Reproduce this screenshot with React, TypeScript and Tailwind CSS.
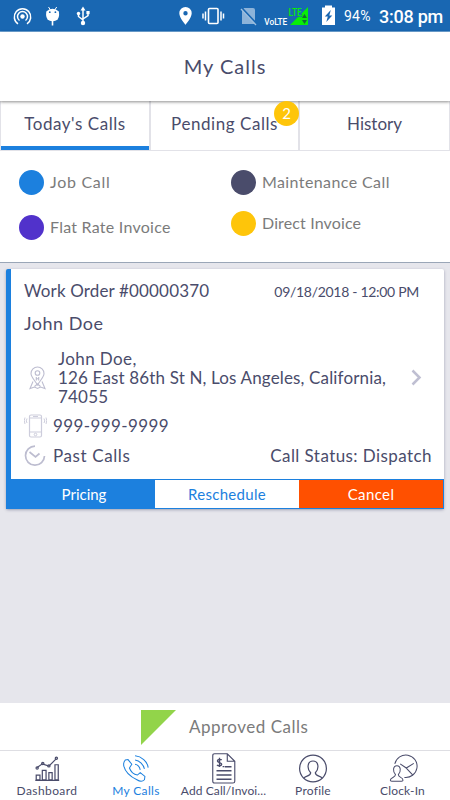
import React from 'react';

const ink = 'text-[#4a4c6b]';

function StatusBar() {
  return (
    <div className="flex h-[32px] shrink-0 items-center border-b border-[#6fa5d6] bg-[#1967b2] font-['Roboto',sans-serif] text-white">
      <svg className="h-[31px] w-[260px] shrink-0" viewBox="0 0 260 31" fill="none" stroke="white">
        <circle cx="22.500" cy="16.500" r="2.200" fill="white" stroke="none" />
        <path d="M19.500 20.500a5 5 0 1 1 6 0M18 23.800a8.200 8.200 0 1 1 9 0" strokeWidth="1.500" />
        <g fill="white" stroke="none">
          <path d="M46.300 11.500Q49 8.800 52.500 8.800T58.900 11.500Q60 18.500 56 20.500Q52.500 22 49.200 20.500Q45.200 18.500 46.300 11.500z" />
          <rect x="51.700" y="21" width="1.600" height="4.500" />
          <circle cx="49.800" cy="12.200" r=".9" fill="#1967b2" />
          <circle cx="55.400" cy="12.200" r=".9" fill="#1967b2" />
        </g>
        <path d="M48.500 7l2 3M56.700 7l-2 3" strokeWidth="1" />
        <path d="M83 8v15M78.500 13v3.500l4.500 3.500M88 12v3.500l-5 3.500" strokeWidth="1.500" />
        <g fill="white" stroke="none">
          <path d="M83 6.500l2.500 4h-5z" />
          <circle cx="83" cy="23" r="2.200" />
          <circle cx="78.500" cy="13.500" r="1.700" />
          <rect x="86.400" y="11" width="3.200" height="3.200" />
          <path fillRule="evenodd" d="M185.500 7a6.200 6.200 0 0 0-6.200 6.200c0 4.600 6.200 11.500 6.200 11.500s6.200-6.900 6.200-11.500A6.200 6.200 0 0 0 185.500 7zm0 4a2.200 2.200 0 1 1 0 4.400a2.200 2.200 0 0 1 0-4.400z" />
          <path d="M242 10l2-2h9q2 0 2 2v14h-13z" fillOpacity=".5" />
        </g>
        <rect x="208.500" y="8.500" width="9.500" height="15" rx="1" strokeWidth="1.600" />
        <path d="M205.500 11.500v9M221 11.500v9M203 13.500v5M223.500 13.500v5" strokeWidth="1.500" />
        <path d="M241.500 8l15 16" stroke="#1967b2" strokeWidth="2.500" />
        <path d="M241 9l15 16" stroke="#9fc0e0" strokeWidth="1.300" />
      </svg>
      <svg className="h-[31px] w-[84px] shrink-0" viewBox="260 0 84 31">
        <text x="264.300" y="24.700" fontFamily="Roboto, sans-serif" fontSize="9.500" fontWeight="500" fill="white" textLength="23" lengthAdjust="spacingAndGlyphs">VoLTE</text>
        <path d="M308 7v18h-18z" fill="#08ee08" />
        <text x="288.500" y="15.500" fontFamily="Roboto, sans-serif" fontSize="11" fontWeight="500" fill="#08ee08" stroke="#1967b2" strokeWidth="1.500" paintOrder="stroke" textLength="13" lengthAdjust="spacingAndGlyphs">LTE</text>
        <path d="M304.500 14l2.500 4h-5zM304.500 24l2.500-4h-5z" fill="#126c38" />
        <path d="M322 7.500h3v-2h7v2h3V25h-13z" fill="white" />
        <path d="M330.800 10l-6 6.500h3l-1.500 5.500 6-6.500h-3z" fill="#1967b2" />
      </svg>
      <span className="w-[35px] pt-[2px] text-[14px] tracking-[0.200px] whitespace-nowrap">94%</span>
      <span className="pt-[2px] text-[18px] font-medium tracking-[-0.250px] whitespace-nowrap">3:08 pm</span>
    </div>
  );
}

function Legend({ dot, label, spacing }: { dot: string; label: string; spacing: string }) {
  return (
    <div className="flex h-[26px] items-center gap-[6px]">
      <span className={`h-[25px] w-[25px] shrink-0 rounded-full ${dot}`} />
      <span className={`text-[16px] whitespace-nowrap text-[#7b7b7b] ${spacing}`}>{label}</span>
    </div>
  );
}

function Card() {
  return (
    <section className={`mx-[6px] mt-[6px] h-[240px] w-[438px] rounded-[2px] border-l-[5px] border-[#1c80de] bg-white shadow-[0_1px_3px_rgba(70,75,110,0.45)] ${ink}`}>
      <div className="flex h-[210px] flex-col pl-[13px]">
        <div className="flex h-[23px] items-center justify-between pt-[21px] pr-[25px]">
          <span className="text-[17px] tracking-[0.150px]">Work Order #00000370</span>
          <span className="text-[14px] tracking-[-0.300px]">09/18/2018 - 12:00 PM</span>
        </div>
        <div className="mt-[19px] h-[24px] text-[18px] leading-[24px] tracking-[0.500px]">John Doe</div>
        <div className="mt-[14px] flex h-[57px] items-center">
          <svg className="ml-[5px] h-[24px] w-[17px] shrink-0" viewBox="0 0 17 24" fill="none" stroke="#bdbdd0" strokeWidth="1.100">
            <path d="M8.500 19C5.500 14 2 11 2 7.500a6.500 6.500 0 0 1 13 0C15 11 11.500 14 8.500 19z" />
            <circle cx="8.500" cy="7" r="2.300" />
            <path d="M4 15.500L1 22.500l4.500-1.500 3 1.500 3-1.500 4.500 1.500-3-7M7.300 11v3.500M9.700 11v3.500M7.300 12.700h2.400M5.500 20.500l3-2.500 3 2.500" />
          </svg>
          <div className="ml-[12px] text-[17px] leading-[19px] tracking-[0.150px] whitespace-nowrap">
            <div className="tracking-[0.400px]">John Doe,</div>
            <div>126 East 86th St N, Los Angeles, California,</div>
            <div className="tracking-[0.200px]">74055</div>
          </div>
          <svg className="mr-[22px] ml-auto h-[17px] w-[11px] shrink-0" viewBox="0 0 11 17" fill="none" stroke="#bfbfd2" strokeWidth="2.500">
            <path d="M1.500 1.500l7 7-7 7" />
          </svg>
        </div>
        <div className="mt-[7px] flex h-[26px] items-center">
          <svg className="h-[24px] w-[23px] shrink-0" viewBox="0 0 23 24" fill="none" stroke="#cdcddc">
            <rect x="5.500" y="1" width="12" height="22" rx="1.500" strokeWidth="1.200" />
            <path d="M5.500 4h12M5.500 18h12M9 2.500h5M3 4.500q-1.500 2.500 0 4.500M1 3.500q-1.500 3 0 6.500M20 4.500q1.500 2.500 0 4.500M22 3.500q1.500 3 0 6.500" />
            <circle cx="11.500" cy="20.500" r="1.300" />
          </svg>
          <span className="ml-[6px] text-[17px] tracking-[0.400px]">999-999-9999</span>
        </div>
        <div className="mt-[3px] flex h-[28px] items-center">
          <svg className="h-[22px] w-[23px] shrink-0" viewBox="0 0 23 22" fill="none" stroke="#bdbdd0" strokeWidth="1.700">
            <path d="M11 1.200A9.500 9.500 0 1 0 20.500 11M5.500 7l6 5 4-3.500" />
          </svg>
          <span className="ml-[6px] text-[17px] tracking-[0.600px]">Past Calls</span>
          <span className="mr-[12px] ml-auto text-[17px] tracking-[0.430px]">Call Status:&nbsp;Dispatch</span>
        </div>
      </div>
      <div className="-ml-[5px] grid h-[30px] grid-cols-[149px_144px_144px] border-y border-r border-[#1c80de] text-center text-[15px] leading-[28px] text-white">
        <div className="bg-[#1c80de] pl-[7px]">Pricing</div>
        <div className="bg-white tracking-[0.300px] text-[#1c80de]">Reschedule</div>
        <div className="bg-[#ff5000] tracking-[0.400px]">Cancel</div>
      </div>
    </section>
  );
}

const icons = {
  dashboard: (
    <g strokeWidth="1.300">
      <path d="M3.500 28.500v-5h4v5zM10 28.500v-10h4v10zM17 28.500v-7.500h3.500v7.500zM23.500 28.500v-16h3.500v16zM2.500 29.200h25.500" />
      <path d="M4.500 15.500l5.500-4 7 2.500 8-8" />
      <circle cx="4.500" cy="16" r="1.200" /><circle cx="10.500" cy="11.200" r="1.200" /><circle cx="17" cy="13.700" r="1.200" /><circle cx="25" cy="5.500" r="1.200" />
    </g>
  ),
  calls: (
    <g strokeWidth="1.100">
      <path d="M3.500 7.500L6.500 7l4 5-2.500 4c1.500 4 5 7 8.500 7.500l3-2.500 5 4-.5 3.500c-2 2-5 2-8 0C8.500 25 3.500 20 2 14c-.5-3 0-5 1.500-6.500z" />
      <path d="M14 12c3 .5 5 3 5.500 6M14 7.500c5 .5 9 5 10 9.500M14 3c7 .5 13 6 14 12.500" />
    </g>
  ),
  invoice: (
    <g strokeWidth="1.200">
      <path d="M5 .8h13.500l8 8V30q0 2-2 2H5q-2 0-2-2V2.800q0-2 2-2M18.500.8v8h8" />
      <path d="M16 14.500h7M7 19h16M7 23.500h16M7 28h16" strokeWidth="1.600" />
      <path d="M12.500 7.500c-1-1.200-4.500-1-4.500 1s4.500 1.500 4.500 3.500-3.500 2.200-5 .8M10.200 5v10M13.500 14.500h2" strokeWidth="1.500" />
    </g>
  ),
  profile: (
    <g strokeWidth="1.300">
      <circle cx="15" cy="16.500" r="14.300" />
      <path d="M5.500 26.500c1.500-2.500 7-1.500 7-5.500-4-4-4-12.500 2.500-12.500s6.500 8.500 2.500 12.500c0 4 5.500 3 7 5.500" />
    </g>
  ),
  clock: (
    <g strokeWidth="1.100">
      <path d="M6.300 11.500A12 12 0 1 1 16.500 26M12 11.500l6.500 4.500 8-5M18.500 16l6.500 7" />
      <path d="M1.500 29c0-3.500 5.500-2.500 5.500-6-3-3-3-9.500 1.500-9.500s4.500 6.500 1.500 9.500c0 3.500 5 2.500 5 6q0 1-1.500 1h-10.500q-1.500 0-1.500-1z" />
    </g>
  ),
};

function Tab({ icon, label, active, spacing = '' }: { icon: React.ReactNode; label: string; active?: boolean; spacing?: string }) {
  return (
    <div className={`flex flex-col items-center pt-[2px] ${active ? 'text-[#1c80de]' : ink}`}>
      <svg className="h-[31px] w-[30px] shrink-0" viewBox="-1 0 32 33" fill="none" stroke="currentColor">{icon}</svg>
      <span className={`text-[12px] leading-[14px] whitespace-nowrap ${spacing}`}>{label}</span>
    </div>
  );
}

export default function App() {
  return (
    <main className="flex h-[800px] w-[450px] flex-col overflow-hidden bg-[#e6e6ec] font-['Lato',sans-serif]">
      <StatusBar />
      <header className={`z-20 flex h-[69px] shrink-0 items-center justify-center bg-white text-[20px] tracking-[1px] shadow-[0_1px_3px_rgba(0,0,0,0.45)] ${ink}`}>
        <span className="pb-[2px]">My Calls</span>
      </header>
      <nav className={`relative flex h-[50px] shrink-0 border-x border-b border-[#e2e2e8] bg-white text-center text-[17px] leading-[46px] ${ink}`}>
        <div className="w-[148px] border-b-[4px] border-[#1c80de] tracking-[0.550px]">Today's Calls</div>
        <div className="w-[151px] border-x-2 border-[#e2e2e8] tracking-[0.550px]">
          Pending Calls
        </div>
        <div className="flex-1">History</div>
        <span className="absolute top-0 left-[273px] z-30 h-[25px] w-[25px] rounded-full bg-[#fec50a] text-[15px] leading-[25px] text-white">2</span>
      </nav>
      <section className="flex h-[112px] shrink-0 border-b border-[#9aa6b7] bg-white pt-[18px] pl-[19px]">
        <div className="flex w-[212px] flex-col gap-[19px]">
          <Legend dot="bg-[#1c80de]" label="Job Call" spacing="tracking-[0.700px]" />
          <Legend dot="bg-[#5132cb]" label="Flat Rate Invoice" spacing="tracking-[0.250px]" />
        </div>
        <div className="flex flex-col gap-[15px]">
          <Legend dot="bg-[#4a4c6b]" label="Maintenance Call" spacing="tracking-[0.400px]" />
          <Legend dot="bg-[#fec50a]" label="Direct Invoice" spacing="tracking-[0.130px]" />
        </div>
      </section>
      <Card />
      <div className="mt-auto flex h-[48px] shrink-0 items-center border-b border-[#dedee3] bg-white pt-px pl-[141px]">
        <svg className="h-[35px] w-[35px]" viewBox="0 0 35 35"><path d="M0 0h35L0 35z" fill="#92d44a" /></svg>
        <span className="ml-[13px] text-[17px] tracking-[0.500px] text-[#7b7b7b]">Approved Calls</span>
      </div>
      <footer className="grid h-[49px] shrink-0 grid-cols-[94px_84px_91px_88px_91px] bg-white">
        <Tab icon={icons.dashboard} label="Dashboard" spacing="tracking-[0.400px]" />
        <Tab icon={icons.calls} label="My Calls" spacing="tracking-[0.350px]" active />
        <Tab icon={icons.invoice} label="Add Call/Invoi..." spacing="tracking-[0.100px]" />
        <Tab icon={icons.profile} label="Profile" spacing="tracking-[0.250px]" />
        <Tab icon={icons.clock} label="Clock-In" spacing="tracking-[0.150px]" />
      </footer>
    </main>
  );
}
